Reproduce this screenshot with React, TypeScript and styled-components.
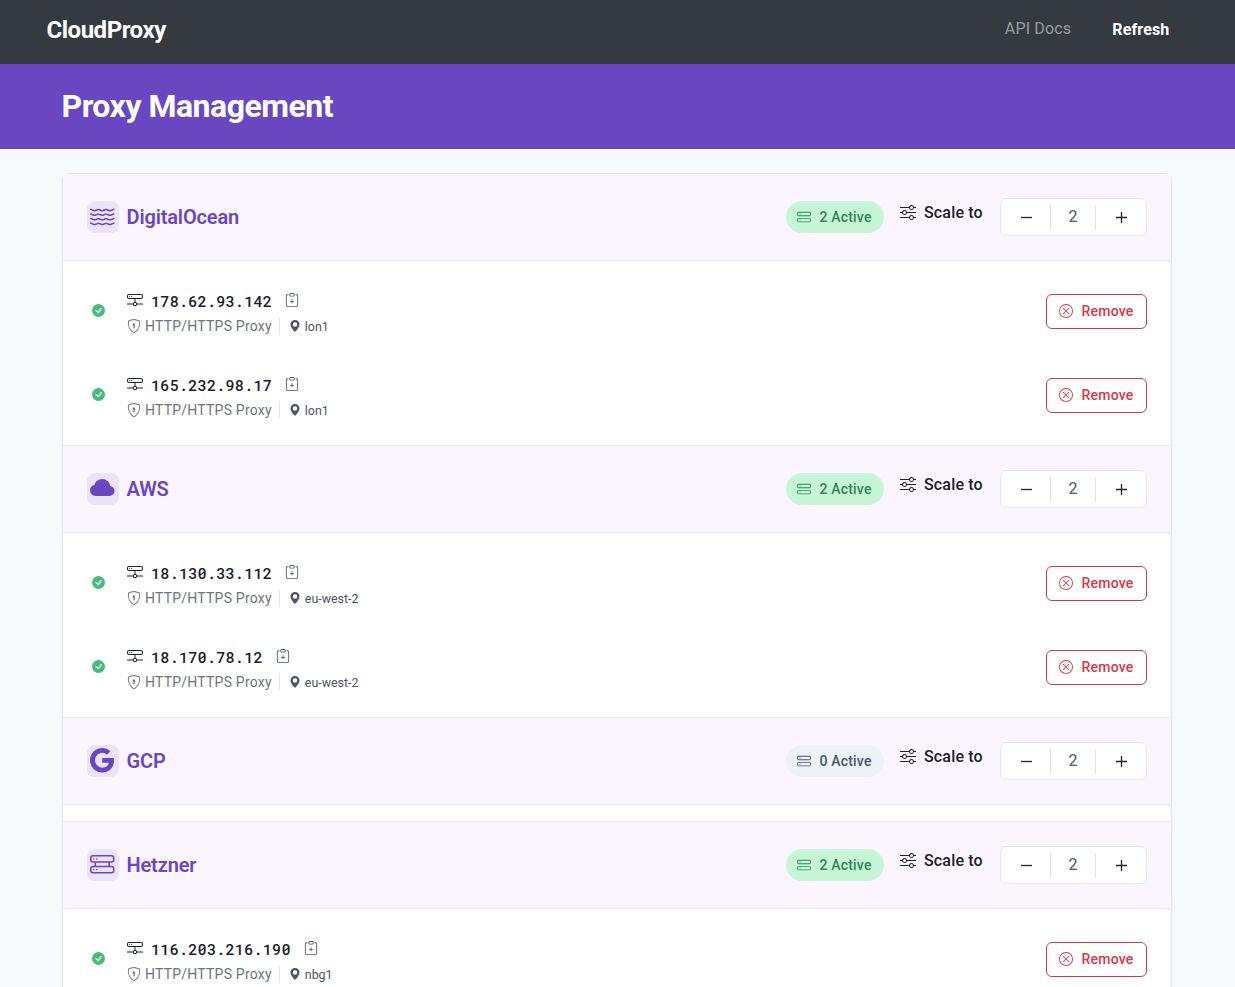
import React from "react";
import styled, { createGlobalStyle } from "styled-components";
import {
  BsWater,
  BsCloudFill,
  BsGoogle,
  BsHddRack,
  BsHddStack,
  BsHddNetwork,
  BsShieldLock,
  BsGeoAltFill,
  BsClipboardPlus,
  BsSliders,
  BsXCircle,
  BsCheckCircleFill,
} from "react-icons/bs";

const GlobalStyle = createGlobalStyle`
  *, *::before, *::after { box-sizing: border-box; }
  body {
    margin: 0;
    height: 987px;
    overflow: hidden;
    background: #f7fafc;
    color: #1a202c;
    font-family: Roboto, "Liberation Sans", sans-serif;
    font-size: 16px;
    line-height: 1.5;
  }
  svg { display: block; flex: none; }
  button { font-family: inherit; cursor: pointer; }
`;

const Navbar = styled.nav`
  display: flex;
  align-items: center;
  justify-content: space-between;
  height: 64px;
  padding: 0 65.5px 4px 46.5px;
  background: #343a40;
`;

const Brand = styled.span`
  font-size: 24px;
  font-weight: 700;
  letter-spacing: -0.48px;
  line-height: 36px;
  color: #fff;
`;

const NavLinks = styled.div`
  display: flex;
  align-items: center;
  gap: 41px;
`;

const NavLink = styled.a<{ $strong?: boolean }>`
  font-size: 16px;
  line-height: 24px;
  font-weight: ${(p) => (p.$strong ? 700 : 400)};
  letter-spacing: 0.16px;
  color: ${(p) => (p.$strong ? "#fff" : "#999c9f")};
  margin-top: ${(p) => (p.$strong ? "0" : "-2px")};
`;

const Hero = styled.header`
  height: 85px;
  padding: 18px 61.5px 0;
  background: #6b46c1;
`;

const Title = styled.h1`
  margin: 0;
  font-size: 32px;
  line-height: 48px;
  font-weight: 700;
  letter-spacing: -0.5px;
  color: #fff;
`;

const Card = styled.main`
  margin: 24px 63px 0 62px;
  height: 840px;
  border: 1px solid #e2e8f0;
  border-radius: 8px;
  background: #fff;
  box-shadow: 0 1px 3px rgba(0, 0, 0, 0.05);
`;

const Section = styled.section`
  & + & { border-top: 1px solid #e2e8f0; }
`;

const SectionHeader = styled.div`
  display: flex;
  align-items: center;
  height: 87px;
  padding: 0 24px;
  background: #faf5ff;
  border-bottom: 1px solid #e2e8f0;
  ${Section}:first-child & { border-radius: 3px 3px 0 0; }
`;

const ProviderIcon = styled.span`
  display: flex;
  justify-content: center;
  width: 32px;
  height: 32px;
  padding: 3px 1px 0 0;
  border-radius: 8px;
  background: #ebe3f8;
  color: #6b46c1;
  font-size: 24.5px;
`;

const ProviderName = styled.h2`
  flex: 1;
  margin: 0 0 0 7.5px;
  font-size: 20px;
  line-height: 30px;
  font-weight: 600;
  letter-spacing: -0.15px;
  color: #6b46c1;
`;

const Badge = styled.span<{ $active: boolean }>`
  display: flex;
  align-items: center;
  justify-content: center;
  gap: 8px;
  width: 98px;
  height: 32px;
  border-radius: 16px;
  font-size: 14px;
  font-weight: 500;
  letter-spacing: 0.2px;
  background: ${(p) => (p.$active ? "#c6f6d5" : "#edf2f7")};
  color: ${(p) => (p.$active ? "#2f855a" : "#4a5568")};
`;

const ScaleLabel = styled.span`
  display: flex;
  align-items: center;
  gap: 8.5px;
  width: 83.5px;
  margin: 0 17px 9px 16px;
  font-weight: 500;
  letter-spacing: 0.16px;
  white-space: nowrap;

  svg { margin-bottom: 1px; }
`;

const Stepper = styled.div`
  display: flex;
  align-items: center;
  width: 147px;
  height: 38px;
  border: 1px solid #e2e8f0;
  border-radius: 6px;
  background: #fff;
`;

const StepButton = styled.button`
  display: flex;
  justify-content: center;
  width: 49px;
  padding: 1px 0 0 1px;
  border: 0;
  background: none;
  color: #212529;
`;

const StepValue = styled.span`
  width: 46px;
  height: 24px;
  border: solid #dee2e6;
  border-width: 0 1px;
  line-height: 24px;
  text-align: center;
  color: #4a5568;
`;

const ProxyList = styled.div`
  padding: 8px 0;
`;

const ProxyRow = styled.div`
  display: flex;
  align-items: center;
  height: 84px;
  padding: 0 24px 0 29px;
`;

const Status = styled.span`
  margin-bottom: 1px;
  color: #48bb78;
`;

const Details = styled.div`
  flex: 1;
  margin: 3px 0 0 21.5px;
`;

const AddressLine = styled.div`
  display: flex;
  align-items: center;
  height: 26px;
`;

const Address = styled.span`
  margin: 2px 13px 0 8.5px;
  font-family: "Roboto Mono", "DejaVu Sans Mono", monospace;
  font-size: 15.2px;
  font-weight: 500;
  letter-spacing: 0.2px;
`;

const MutedIcon = styled.span`
  color: #4a5568;
`;

const MetaLine = styled.div`
  display: flex;
  align-items: center;
  height: 25px;
`;

const Label = styled.span<{ $drop: number }>`
  padding-top: ${(p) => p.$drop}px;
`;

const Protocol = styled.span`
  display: flex;
  align-items: center;
  gap: 4.5px;
  font-size: 14px;
  letter-spacing: 0.22px;
  color: #6c757d;
`;

const Location = styled.span`
  display: flex;
  align-items: center;
  gap: 4px;
  height: 18px;
  margin-left: 7.5px;
  padding-left: 8.5px;
  border-left: 1px solid #e2e8f0;
  font-size: 12.4px;
  color: #4a5568;
`;

const RemoveButton = styled.button`
  display: flex;
  align-items: center;
  justify-content: center;
  gap: 8px;
  width: 101px;
  height: 35px;
  padding: 0;
  border: 1px solid #dc3545;
  border-radius: 6px;
  background: #fff;
  color: #dc3545;
  font-size: 14px;
  font-weight: 500;
  letter-spacing: 0.25px;
`;

type Proxy = { ip: string; region: string };
type Provider = { name: string; icon: React.ReactNode; active: number; proxies: Proxy[] };

const providers: Provider[] = [
  {
    name: "DigitalOcean",
    icon: <BsWater />,
    active: 2,
    proxies: [
      { ip: "178.62.93.142", region: "lon1" },
      { ip: "165.232.98.17", region: "lon1" },
    ],
  },
  {
    name: "AWS",
    icon: <BsCloudFill />,
    active: 2,
    proxies: [
      { ip: "18.130.33.112", region: "eu-west-2" },
      { ip: "18.170.78.12", region: "eu-west-2" },
    ],
  },
  { name: "GCP", icon: <BsGoogle />, active: 0, proxies: [] },
  {
    name: "Hetzner",
    icon: <BsHddRack />,
    active: 2,
    proxies: [{ ip: "116.203.216.190", region: "nbg1" }],
  },
];

function StepIcon({ plus }: { plus?: boolean }) {
  return (
    <svg width="13" height="13" viewBox="0 0 13 13" stroke="currentColor" strokeWidth="1.3">
      <path d={plus ? "M1 6.5h11M6.5 1v11" : "M1 6.5h11"} />
    </svg>
  );
}

function ProxyItem({ ip, region }: Proxy) {
  return (
    <ProxyRow>
      <Status>
        <BsCheckCircleFill size={13} />
      </Status>
      <Details>
        <AddressLine>
          <BsHddNetwork size={16} />
          <Address>{ip}</Address>
          <MutedIcon>
            <BsClipboardPlus size={14} />
          </MutedIcon>
        </AddressLine>
        <MetaLine>
          <Protocol>
            <BsShieldLock size={14} />
            <Label $drop={2}>HTTP/HTTPS Proxy</Label>
          </Protocol>
          <Location>
            <BsGeoAltFill size={12} />
            <Label $drop={3}>{region}</Label>
          </Location>
        </MetaLine>
      </Details>
      <RemoveButton>
        <BsXCircle size={14} />
        Remove
      </RemoveButton>
    </ProxyRow>
  );
}

export default function App() {
  return (
    <>
      <GlobalStyle />
      <Navbar>
        <Brand>CloudProxy</Brand>
        <NavLinks>
          <NavLink>API Docs</NavLink>
          <NavLink $strong>Refresh</NavLink>
        </NavLinks>
      </Navbar>
      <Hero>
        <Title>Proxy Management</Title>
      </Hero>
      <Card>
        {providers.map((p) => (
          <Section key={p.name}>
            <SectionHeader>
              <ProviderIcon>{p.icon}</ProviderIcon>
              <ProviderName>{p.name}</ProviderName>
              <Badge $active={p.active > 0}>
                <BsHddStack size={14} />
                {p.active} Active
              </Badge>
              <ScaleLabel>
                <BsSliders size={16} />
                Scale to
              </ScaleLabel>
              <Stepper>
                <StepButton aria-label="Decrease">
                  <StepIcon />
                </StepButton>
                <StepValue>2</StepValue>
                <StepButton aria-label="Increase">
                  <StepIcon plus />
                </StepButton>
              </Stepper>
            </SectionHeader>
            <ProxyList>
              {p.proxies.map((x) => (
                <ProxyItem key={x.ip} {...x} />
              ))}
            </ProxyList>
          </Section>
        ))}
      </Card>
    </>
  );
}
